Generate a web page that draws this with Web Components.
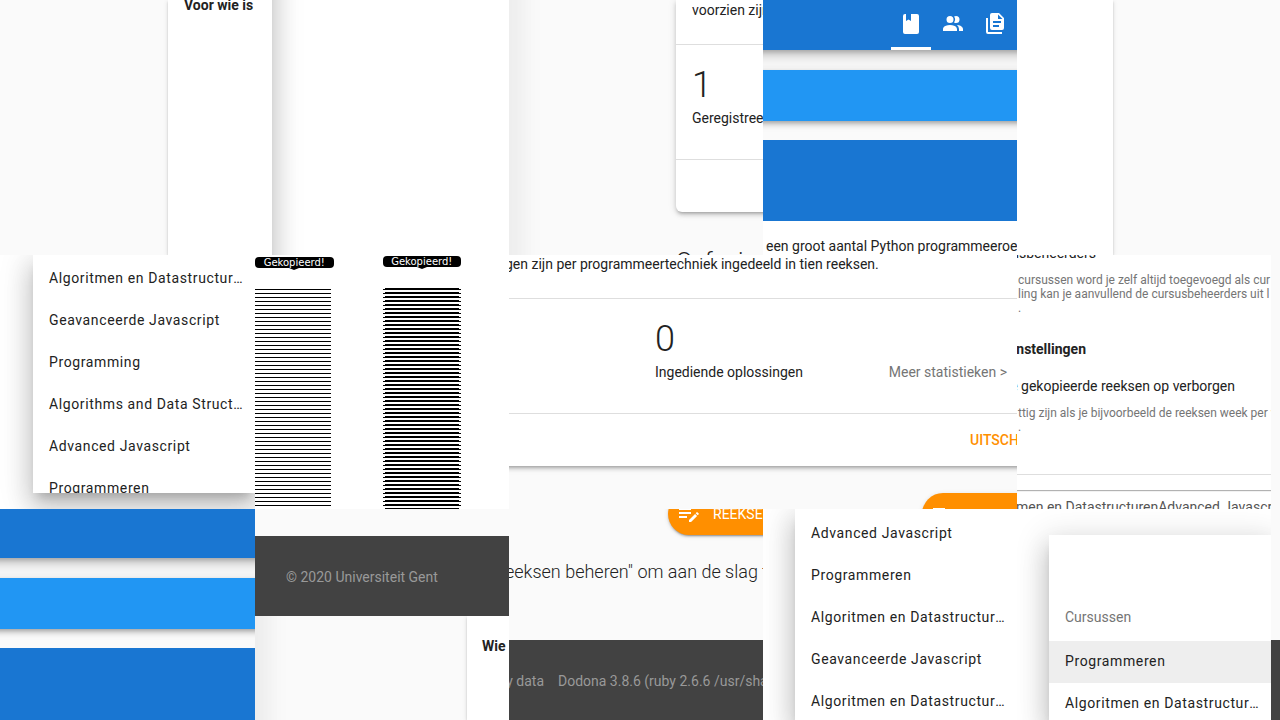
<!DOCTYPE html>
<html lang="nl">
<head>
<meta charset="utf-8">
<title>Dodona</title>
<style>
html, body { margin: 0; height: 100%; }
body {
  font-family: Roboto, sans-serif; font-size: 14px; line-height: 20px; color: #222; background: #fafafa;
  --divider: #dedede; --muted: #757575; --primary: #1976d2; --accent: #2196f3; --orange: #ff8f00; --footer: #424242;
  --lift1: 0 2px 2px 0 rgba(0,0,0,.14), 0 3px 1px -2px rgba(0,0,0,.2), 0 1px 5px 0 rgba(0,0,0,.12);
  --lift3: 0 3px 3px -2px rgba(0,0,0,.2), 0 3px 4px 0 rgba(0,0,0,.14), 0 1px 8px 0 rgba(0,0,0,.12);
  --lift4: 0 2px 4px -1px rgba(0,0,0,.2), 0 4px 5px 0 rgba(0,0,0,.14), 0 1px 10px 0 rgba(0,0,0,.12);
  --lift6: 0 3px 5px -1px rgba(0,0,0,.2), 0 6px 10px 0 rgba(0,0,0,.14), 0 1px 18px 0 rgba(0,0,0,.12);
  --lift16: 0 8px 10px -5px rgba(0,0,0,.2), 0 16px 24px 2px rgba(0,0,0,.14), 0 6px 30px 5px rgba(0,0,0,.12);
}
</style>
</head>
<body>
<app-mosaic></app-mosaic>
<script>
const define = (name, html, setup) => customElements.define(name, class extends HTMLElement {
  constructor() {
    super();
    this.attachShadow({ mode: 'open' }).innerHTML = html;
  }
  connectedCallback() { if (setup) setup(this, this.shadowRoot); }
});

const icons = {
  book: 'M18 22A2 2 0 0 0 20 20V4A2 2 0 0 0 18 2H12V9L9.5 7.5L7 9V2H6A2 2 0 0 0 4 4V20A2 2 0 0 0 6 22H18Z',
  people: 'M16 17V19H2V17S2 13 9 13 16 17 16 17M12.5 7.5A3.5 3.5 0 1 0 9 11A3.5 3.5 0 0 0 12.5 7.5M15.94 13A5.32 5.32 0 0 1 18 17V19H22V17S22 13.37 15.94 13M15 4A3.39 3.39 0 0 0 13.07 4.59A5 5 0 0 1 13.07 10.41A3.39 3.39 0 0 0 15 11A3.5 3.5 0 0 0 15 4Z',
  files: 'M3 6H5V20H19V22H5A2 2 0 0 1 3 20ZM9 1H16L21 6V16A2 2 0 0 1 19 18H9A2 2 0 0 1 7 16V3A2 2 0 0 1 9 1M15 2.5V7H19.5ZM10 9V11H18V9ZM10 13V15H16V13Z',
  edit: 'M2 6V8H14V6H2M2 10V12H14V10H2M20.04 10.13C19.9 10.13 19.76 10.19 19.65 10.3L18.65 11.3L20.7 13.35L21.7 12.35C21.92 12.14 21.92 11.79 21.7 11.58L20.42 10.3C20.31 10.19 20.18 10.13 20.04 10.13M18.07 11.88L12 17.94V20H14.06L20.12 13.93L18.07 11.88M2 14V16H10V14H2Z'
};

define('app-icon', `
<style>:host { display: block; width: 24px; height: 24px; } svg { display: block; }</style>
<svg width="24" height="24" viewBox="0 0 24 24" fill="currentColor" fill-rule="evenodd" aria-hidden="true"><path/></svg>`,
(el, root) => root.querySelector('path').setAttribute('d', icons[el.getAttribute('name')]));

define('nav-tabs', `
<style>
:host { display: flex; flex: none; justify-content: flex-end; gap: 2px; box-sizing: border-box; height: 50px; margin: 0 -20px; padding-right: 22px; color: #fff; background: var(--primary); box-shadow: var(--lift6); }
button { display: flex; justify-content: center; align-items: center; box-sizing: border-box; width: 40px; padding: 0; border: 0; border-top: 1px solid transparent; border-bottom: 3px solid transparent; color: inherit; background: none; }
button.on { border-bottom-color: #fff; }
</style>
<button class="on" aria-label="Cursus"><app-icon name="book"></app-icon></button>
<button aria-label="Gebruikers"><app-icon name="people"></app-icon></button>
<button aria-label="Bestanden"><app-icon name="files"></app-icon></button>`);

define('top-bar', `
<style>:host { display: block; flex: none; height: 49px; margin: 0 -20px; background: var(--primary); box-shadow: var(--lift6); }</style>`);

define('accent-bar', `
<style>:host { display: block; flex: none; height: 51px; margin: 20px -20px 19px; background: var(--accent); box-shadow: var(--lift4); }</style>`);

define('title-block', `
<style>:host { display: block; flex: none; height: 81px; background: var(--primary); }</style>`);

/* Full-height edge of the navigation drawer, with its elevation. */
define('drawer-edge', `
<style>:host { display: block; flex: none; width: var(--w, 0px); margin: -60px 0; background: #fff; box-shadow: var(--lift16); }</style>`);

define('side-card', `
<style>
:host { display: block; flex: none; box-sizing: border-box; padding-left: 16px; background: #fff; box-shadow: var(--lift1); font-weight: 700; white-space: nowrap; }
</style><slot></slot>`);

define('course-menu', `
<style>
:host { display: block; box-sizing: border-box; background: #fff; box-shadow: var(--lift16); }
nav { display: flex; flex-direction: column; height: 100%; overflow: hidden; }
h2 { margin: 0; padding: 72px 16px 14px; font-size: 14px; font-weight: 400; line-height: 20px; color: var(--muted); }
a { flex: none; box-sizing: border-box; height: 42px; padding: 10px 10px 12px 16px; color: inherit; text-decoration: none; letter-spacing: .044em; white-space: nowrap; overflow: hidden; text-overflow: ellipsis; }
a.on { background: #eee; }
</style><nav></nav>`,
(el, root) => {
  const nav = root.querySelector('nav');
  nav.textContent = '';
  if (el.hasAttribute('heading')) {
    const h = document.createElement('h2');
    h.textContent = el.getAttribute('heading');
    nav.append(h);
  }
  el.getAttribute('items').split('|').forEach((text, i) => {
    const a = document.createElement('a');
    a.href = '#';
    a.textContent = text;
    if (i === 0 && el.hasAttribute('heading')) a.className = 'on';
    nav.append(a);
  });
});

define('stat-row', `
<style>
:host { display: flex; justify-content: space-between; align-items: flex-end; box-sizing: border-box; height: 116px; padding: 17px 10px 31px var(--inset, 16px); border: solid var(--divider); border-width: 1px 0; white-space: nowrap; }
strong { display: block; font-size: 36px; line-height: 46px; font-weight: 300; }
</style>
<div><strong></strong><span></span></div><slot></slot>`,
(el, root) => {
  root.querySelector('strong').textContent = el.getAttribute('value');
  root.querySelector('span').textContent = el.getAttribute('label');
});

define('pill-button', `
<style>
:host { display: block; flex: none; width: 95px; }
button { display: flex; align-items: center; gap: 12px; box-sizing: border-box; height: 42px; width: 200px; padding: 0 9px; border: 0; border-radius: 21px; background: var(--orange); color: #fff; font: 400 14px/20px Roboto, sans-serif; white-space: nowrap; box-shadow: var(--lift1); }
</style>
<button aria-label="Reeksen beheren"><app-icon name="edit"></app-icon><slot></slot></button>`);

define('copy-stack', `
<style>
:host { display: flex; flex-direction: column; align-items: center; width: 79px; box-sizing: border-box; padding-top: 2px; color: #fff; }
.tip { display: flex; justify-content: center; width: 100%; height: 11px; border-radius: 4px; background: #000; font: 10px/11px "DejaVu Sans", sans-serif; }
i { border: solid transparent; border-width: 2px 5px 0; border-top-color: #000; }
.lines { flex: 1; width: 76px; margin: 19px 2px 0 0; background: linear-gradient(#000 1px, transparent 1px) 0 0 / 76px 4px repeat-y; }
:host([heavy]) { padding-top: 1px; }
:host([heavy]) .lines { width: 78px; margin: 19px 0 0; background:
  linear-gradient(#000 1px, transparent 1px) 2px 0 / 74px 4px repeat-y,
  linear-gradient(#000 1px, transparent 1px) 0 1px / 78px 4px repeat-y; }
</style>
<div class="tip"><slot></slot></div><i></i><div class="lines"></div>`);

define('page-footer', `
<style>
:host { display: flex; flex: none; gap: 14px; box-sizing: border-box; height: 80px; padding: 31px 0 0 var(--inset, 0px); background: var(--footer); color: #999; white-space: nowrap; }
</style><slot></slot>`);

define('app-mosaic', `
<style>
:host {
  display: grid; height: 100vh; min-height: 640px; overflow: hidden;
  grid-template-columns: minmax(0,255fr) repeat(4, minmax(0,254fr)) minmax(0,9fr);
  grid-template-rows: minmax(0,255fr) minmax(0,254fr) minmax(0,211fr);
}
section { display: flex; overflow: hidden; background: #fafafa; min-width: 0; }
.col { flex-direction: column; }
.white { background: #fff; }
p, h2, h3 { margin: 0; white-space: nowrap; }
.end { justify-content: flex-end; }
.sheet { background: #fff; box-shadow: var(--lift3); }
.grow { flex: 1; }
a { color: var(--muted); text-decoration: none; }

.card { margin-left: 167px; border-radius: 0 0 0 6px; height: 212px; }
.card p { height: 44px; padding-left: 16px; }
.light { font-size: 24px; line-height: 32px; font-weight: 300; margin: 33px 0 0 167px; }
.intro { padding: 15px 0 0 3px; background: #fff; flex: 1; }

.stats { grid-column: 3 / span 2; }
.stats .sheet { height: 211px; margin: 0 -20px; padding: 0 20px; }
.stats stat-row { margin: 0 -20px; padding: 17px 30px 31px 166px; }
.stats .sheet p { height: 43px; line-height: 18px; text-indent: -4px; }
.actions { display: flex; justify-content: flex-end; padding: 16px 0; }
.actions button { width: 47px; padding: 0; border: 0; background: none; color: var(--orange); font: 500 14px/20px Roboto, sans-serif; text-align: left; }
.pill { display: flex; justify-content: flex-end; margin-top: 27px; }

.form .note { font-size: 12px; line-height: 14px; color: var(--muted); padding: 10px 0 0 1px; white-space: pre; }
.fit { display: flex; justify-content: flex-end; }
.fit.a { width: 79px; margin-top: -12px; }
.fit.b { width: 69px; font-size: 14px; font-weight: 700; padding-top: 24px; }
.fit.c { width: 218px; padding-top: 17px; }
.form hr { width: 100%; margin: 40px 0 0; border: 0; border-top: 1px solid var(--divider); }
.strip { flex: none; height: 15px; box-shadow: 0 1px 1px rgba(0,0,0,.3); }
.below { color: #555; padding-top: 7px; text-indent: -1px; }

.menu { width: 222px; flex: none; }
.hint { font-size: 18px; line-height: 24px; font-weight: 300; padding-top: 25px; text-indent: -4px; }
.rail { grid-column: 6; grid-row: 1 / span 3; }
.copies { padding-right: 48px; gap: 49px; }
.bottom { display: flex; flex: 1; overflow: hidden; justify-content: space-between; }
.cut { display: flex; justify-content: flex-end; width: 35px; }
.tools { display: flex; flex: none; justify-content: flex-end; align-items: flex-end; height: 26px; }
</style>

<section class="end" style="grid-area: 1/1"><side-card style="width:87px; line-height:10px">Voor wie is</side-card></section>

<section class="white" style="grid-area: 1/2"><drawer-edge style="--w:17px"></drawer-edge></section>

<section style="grid-area: 1/3">
  <drawer-edge></drawer-edge>
  <div class="grow">
    <div class="sheet card"><p>voorzien zijn</p><stat-row value="1" label="Geregistree"></stat-row></div>
    <h2 class="light">Oefeningen</h2>
  </div>
</section>

<section class="col" style="grid-area: 1/4">
  <nav-tabs></nav-tabs><accent-bar></accent-bar><title-block></title-block>
  <p class="intro">een groot aantal Python programmeeroe</p>
</section>

<section style="grid-area: 1/5"><side-card style="width:96px"></side-card></section>

<section class="white end" style="grid-area: 2/1">
  <course-menu class="menu" style="height:238px; padding-top:3px" items="Algoritmen en Datastructuren|Geavanceerde Javascript|Programming|Algorithms and Data Structures|Advanced Javascript|Programmeren"></course-menu>
</section>

<section class="white copies end" style="grid-area: 2/2">
  <copy-stack>Gekopieerd!</copy-stack><copy-stack heavy>Gekopieerd!</copy-stack>
</section>

<section class="col stats" style="grid-row: 2">
  <div class="sheet">
    <p>gen zijn per programmeertechniek ingedeeld in tien reeksen.</p>
    <stat-row value="0" label="Ingediende oplossingen"><a href="#">Meer statistieken &gt;</a></stat-row>
    <div class="actions"><button>UITSCH</button></div>
  </div>
  <div class="pill"><pill-button></pill-button></div>
</section>

<section class="white col form" style="grid-area: 2/5">
  <p class="fit a">usbeheerders</p>
  <p class="note">cursussen word je zelf altijd toegevoegd als cur
ling kan je aanvullend de cursusbeheerders uit l
.</p>
  <h3 class="fit b">nstellingen</h3>
  <p class="fit c">e gekopieerde reeksen op verborgen</p>
  <p class="note">ttig zijn als je bijvoorbeeld de reeksen week per v
.</p>
  <hr><div class="strip"></div>
  <p class="below">men en DatastructurenAdvanced Javascr</p>
</section>

<section class="col" style="grid-area: 3/1">
  <top-bar></top-bar><accent-bar></accent-bar><title-block></title-block>
</section>

<section class="col" style="grid-area: 3/2">
  <page-footer style="margin-top:27px; --inset:31px"><span>© 2020 Universiteit Gent</span></page-footer>
  <div class="bottom"><drawer-edge></drawer-edge><side-card style="width:42px; padding:20px 0 0 15px">Wie</side-card></div>
</section>

<section class="col" style="grid-area: 3/3">
  <div class="tools"><pill-button>REEKSE</pill-button></div>
  <p class="hint grow">eeksen beheren" om aan de slag t</p>
  <page-footer><span class="cut">y&nbsp;data</span><span>Dodona 3.8.6 (ruby 2.6.6 /usr/sha</span></page-footer>
</section>

<section class="white end" style="grid-area: 3/4">
  <course-menu class="menu" style="padding-top:4px" items="Advanced Javascript|Programmeren|Algoritmen en Datastructuren|Geavanceerde Javascript|Algoritmen en Datastructuren"></course-menu>
</section>

<section class="white end" style="grid-area: 3/5">
  <course-menu class="menu" style="margin-top:26px" heading="Cursussen" items="Programmeren|Algoritmen en Datastructuren|Algorithms"></course-menu>
</section>

<section class="col rail"><div class="grow"></div><page-footer></page-footer></section>`);
</script>
</body>
</html>
